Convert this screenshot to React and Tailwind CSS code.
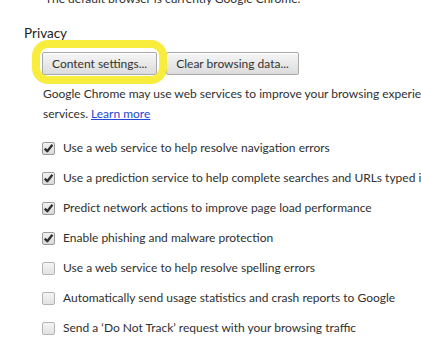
import React from 'react'

const options = [
  { label: 'Use a web service to help resolve navigation errors', checked: true },
  { label: 'Use a prediction service to help complete searches and URLs typed in the address bar or the app launcher search box', checked: true },
  { label: 'Predict network actions to improve page load performance', checked: true },
  { label: 'Enable phishing and malware protection', checked: true },
  { label: 'Use a web service to help resolve spelling errors', checked: false },
  { label: 'Automatically send usage statistics and crash reports to Google', checked: false },
  { label: "Send a \u2018Do Not Track\u2019 request with your browsing traffic", checked: false },
]

const Checkbox = ({ checked }) => (
  <span
    className={`w-[13px] h-[13px] shrink-0 rounded-[2px] border flex items-center justify-center ${
      checked ? 'border-[#9a9a9a] bg-gradient-to-b from-[#f2f2f2] to-[#d9d9d9]' : 'border-[#b4b4b4] bg-gradient-to-b from-[#f4f4f4] to-[#e2e2e2]'
    }`}
  >
    {checked && (
      <svg width="11" height="11" viewBox="0 0 11 11">
        <path d="M1.8 5.6 L4.3 8.2 L9.4 1.8" fill="none" stroke="#2e2e2e" strokeWidth="2.3" strokeLinejoin="round" />
      </svg>
    )}
  </span>
)

const Button = ({ children }) => (
  <button className="h-[23px] px-[9px] rounded-[2px] border border-[#a9a9a9] bg-gradient-to-b from-[#f6f6f6] to-[#dcdcdc] text-[12px] text-[#333] whitespace-nowrap shadow-[inset_0_1px_0_#fff]">
    {children}
  </button>
)

export default function App() {
  return (
    <div className="w-[421px] h-[349px] overflow-hidden bg-white text-[#303030] text-[12px] font-['Lato','Open_Sans',sans-serif]">
      <div className="pl-[45px] mt-[-9px] h-[16px] leading-[16px] whitespace-nowrap">
        The default browser is currently Google Chrome.
      </div>

      <div className="pl-[24px] mt-[17px] h-[18px] leading-[18px] text-[13.5px] text-[#222]">Privacy</div>

      <div className="pl-[42px] mt-[10px] flex gap-[9px]">
        <div className="relative">
          <span className="absolute left-[-10px] right-[-10px] top-[-12px] bottom-[-9px] border-[8px] border-[#f8ec3c] rounded-[16px]" />
          <Button>Content settings...</Button>
        </div>
        <Button>Clear browsing data...</Button>
      </div>

      <div className="pl-[43px] mt-[9px] leading-[20px] whitespace-nowrap">
        <div>Google Chrome may use web services to improve your browsing experience. You may optionally disable these</div>
        <div>
          services. <a className="text-[#2448d8] underline">Learn more</a>
        </div>
      </div>

      <div className="pl-[42px] mt-[9px]">
        {options.map((o) => (
          <div key={o.label} className="h-[30px] flex items-center gap-[8px] whitespace-nowrap">
            <Checkbox checked={o.checked} />
            <span>{o.label}</span>
          </div>
        ))}
      </div>
    </div>
  )
}
